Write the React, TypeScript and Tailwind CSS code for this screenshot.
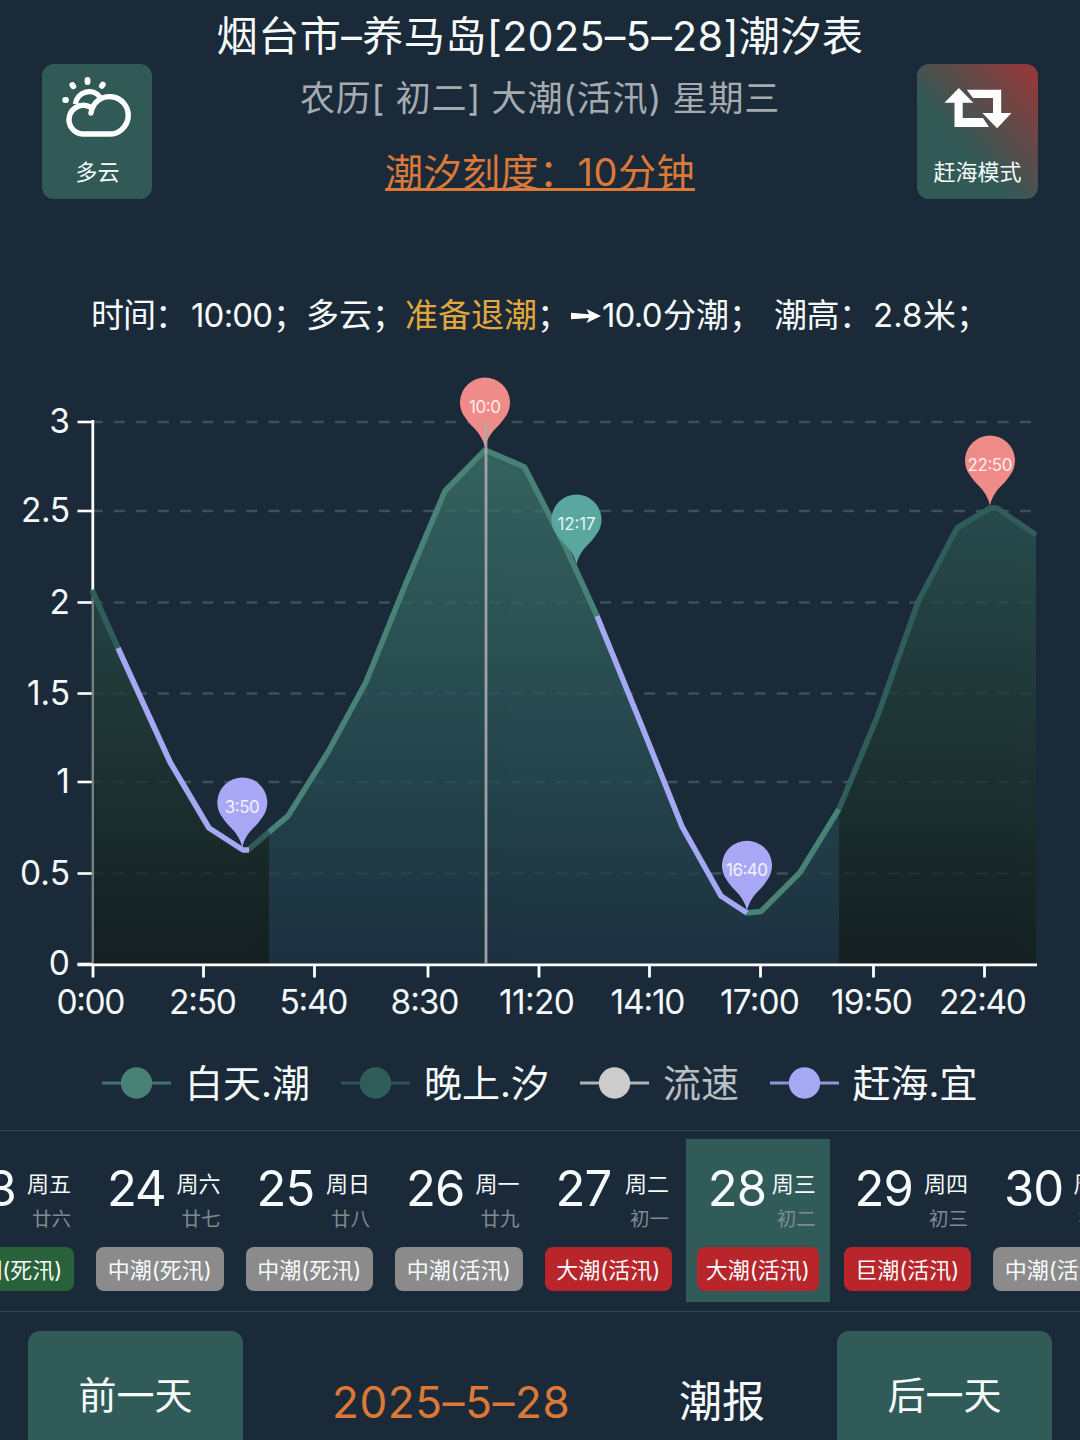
import clsx from 'clsx';

interface TideDay {
  day: string;
  week: string;
  lunar: string;
  tide: string;
  level: 'low' | 'mid' | 'high';
}

const days: TideDay[] = [
  { day: '23', week: '周五', lunar: '廿六', tide: '小潮(死汛)', level: 'low' },
  { day: '24', week: '周六', lunar: '廿七', tide: '中潮(死汛)', level: 'mid' },
  { day: '25', week: '周日', lunar: '廿八', tide: '中潮(死汛)', level: 'mid' },
  { day: '26', week: '周一', lunar: '廿九', tide: '中潮(活汛)', level: 'mid' },
  { day: '27', week: '周二', lunar: '初一', tide: '大潮(活汛)', level: 'high' },
  { day: '28', week: '周三', lunar: '初二', tide: '大潮(活汛)', level: 'high' },
  { day: '29', week: '周四', lunar: '初三', tide: '巨潮(活汛)', level: 'high' },
  { day: '30', week: '周五', lunar: '初四', tide: '中潮(活汛)', level: 'mid' },
];

const levelClass = {
  low: 'bg-[#29613a]',
  mid: 'bg-[#8b8b8b]',
  high: 'bg-[#b8262b]',
};

const yTicks = [
  { label: '3', y: 422, w: 19 },
  { label: '2.5', y: 511, w: 49 },
  { label: '2', y: 602.5, w: 19 },
  { label: '1.5', y: 693.5, w: 43 },
  { label: '1', y: 782, w: 0 },
  { label: '0.5', y: 873.5, w: 50 },
  { label: '0', y: 964, w: 20 },
];

const xTicks = [
  { label: '0:00', x: 93, tx: 91, w: 69 },
  { label: '2:50', x: 203.5, tx: 203, w: 68 },
  { label: '5:40', x: 314.5, tx: 314, w: 69 },
  { label: '8:30', x: 428, tx: 425, w: 69 },
  { label: '11:20', x: 539, tx: 537, w: 76 },
  { label: '14:10', x: 649.5, tx: 648, w: 75 },
  { label: '17:00', x: 760.5, tx: 760, w: 80 },
  { label: '19:50', x: 873.5, tx: 872, w: 82 },
  { label: '22:40', x: 984.5, tx: 983, w: 88 },
];

const pins = [
  { label: '3:50', x: 242.3, y: 802.5, w: 35, color: '#a9a8f6' },
  { label: '10:0', x: 485, y: 402.5, w: 32, color: '#ef8b88' },
  { label: '12:17', x: 576.5, y: 519.5, w: 38, color: '#5aa7a0' },
  { label: '16:40', x: 747, y: 865.7, w: 42, color: '#a9a8f6' },
  { label: '22:50', x: 990, y: 460.5, w: 45, color: '#ef8b88' },
];

const DAY = '#488277';
const NIGHT = '#305c59';
const SEA = '#a5a8f3';

const segments = [
  { color: NIGHT, points: '92,590 118,648' },
  { color: NIGHT, points: '248,850 269,832' },
  { color: DAY, points: '269,832 288,816 328,752 366,682 406,583 445,491 485,450 524.5,467 566,548 597,616' },
  { color: DAY, points: '746,913 761,911.5 800,872.5 839,809' },
  { color: NIGHT, points: '839,809 878,715 918,602 957,528 990,508 997,508 1036,535' },
  { color: SEA, points: '118,648 170,762 209,828 243,850 249,850' },
  { color: SEA, points: '597,616 643,729 682,826.5 721,896 747,913' },
];

const legend = [
  { label: '白天.潮', color: DAY },
  { label: '晚上.汐', color: NIGHT },
  { label: '流速', color: '#cccccc' },
  { label: '赶海.宜', color: SEA },
];

function CloudIcon() {
  return (
    <svg width="70" height="62" viewBox="63 76 70 62" fill="none" stroke="#fff" strokeWidth="5.4" strokeLinecap="round">
      <path d="M92 113 A18.7 18.7 0 1 1 109.5 134 H84 A14.3 14.3 0 1 1 90.5 106.8" />
      <path d="M76.5 104 A13.8 13.8 0 0 1 101.5 97.5" strokeLinecap="butt" />
      <path d="M88.5 79.8v2.2 M73.4 85l.9 1.3 M103.8 84.6l-.9 1.3 M66.2 100h.8" strokeWidth="5.8" />
    </svg>
  );
}

function SwitchIcon() {
  return (
    <svg width="68" height="42" viewBox="943.5 87 68 42" fill="#fff">
      <path d="M958.4 88 972.8 102.7H962.2V118H982.5L988.5 127H954V102.7H943.9Z" />
      <path d="M966.3 89.7H1000.7V113H1011L996.6 128.2 981.8 113H992.5V98H972.5Z" />
    </svg>
  );
}

function TideChart() {
  return (
    <svg className="block shrink-0" width="1080" height="680" viewBox="0 360 1080 680" fontFamily="Inter, sans-serif">
      <defs>
        <linearGradient id="dayFill" gradientUnits="userSpaceOnUse" x1="0" y1="450" x2="0" y2="964">
          <stop offset="0" stopColor="#3d736a" />
          <stop offset=".5" stopColor="#2b5557" />
          <stop offset="1" stopColor="#1d3241" />
        </linearGradient>
        <linearGradient id="nightFill" gradientUnits="userSpaceOnUse" x1="0" y1="507" x2="0" y2="964">
          <stop offset="0" stopColor="#2b5553" />
          <stop offset=".53" stopColor="#1f3531" />
          <stop offset="1" stopColor="#121c19" />
        </linearGradient>
      </defs>

      {/* Achsen und Raster */}
      {yTicks.slice(0, 6).map(t => (
        <path key={t.label} d={`M91.7 ${t.y}H1034`} stroke="#3d4f5a" strokeWidth="2.4" strokeDasharray="11 11.1" />
      ))}
      <path d="M92.8 420V592" stroke="#fff" strokeWidth="2.8" />
      {yTicks.map(t => (
        <path key={t.label} d={`M77.5 ${t.y}H92`} stroke="#fff" strokeWidth="2.6" />
      ))}

      <g opacity=".76">
        <path d="M92 592 118 648 170 762 209 828 243 850 249 850 269 832V964H92Z" fill="url(#nightFill)" />
        <path d="M269 832 288 816 328 752 366 682 406 583 445 491 485 450 524.5 467 566 548 597 616 643 729 682 826.5 721 896 747 913 761 911.5 800 872.5 839 809V964H269Z" fill="url(#dayFill)" />
        <path d="M839 809 878 715 918 602 957 528 990 508 997 508 1036 535V964H839Z" fill="url(#nightFill)" />
      </g>
      <path d="M92.8 596V964" stroke="#73827f" strokeWidth="2.4" />

      {segments.map(s => (
        <polyline key={s.points} points={s.points} fill="none" stroke={s.color} strokeWidth="5.6" strokeLinejoin="round" />
      ))}

      <path d="M77.5 964.8H1037" stroke="#fff" strokeWidth="2.8" />
      {xTicks.map(t => (
        <path key={t.label} d={`M${t.x} 964V977.5`} stroke="#fff" strokeWidth="2.8" />
      ))}

      {pins.map(p => (
        <path
          key={p.label}
          transform={`translate(${p.x} ${p.y})`}
          d="M0 45C-2.5 34-8 28.5-14 22.5-17 19.5-18.5 17-19.5 15.6A25 25 0 1 1 19.5 15.6C18.5 17 17 19.5 14 22.5 8 28.5 2.5 34 0 45Z"
          fill={p.color}
        />
      ))}
      <path d="M486 422V964" stroke="#a9adac" strokeWidth="2.8" opacity=".9" />
      {pins.map(p => (
        <text key={p.label} x={p.x} y={p.y + 10.3} fill="#fff" fillOpacity=".88" fontSize="17" fontWeight="380" textAnchor="middle" textLength={p.w}>
          {p.label}
        </text>
      ))}

      {yTicks.map(t => (
        <text key={t.label} x="70" y={t.y + 11.3} fill="#f4f8fa" fontSize="33.5" fontWeight="385" textAnchor="end" textLength={t.w || undefined}>
          {t.label}
        </text>
      ))}
      {xTicks.map(t => (
        <text key={t.label} x={t.tx} y="1013.7" fill="#f4f8fa" fontSize="33.5" fontWeight="385" textAnchor="middle" textLength={t.w}>
          {t.label}
        </text>
      ))}
    </svg>
  );
}

function DayCell({ item, active }: { item: TideDay; active: boolean }) {
  return (
    <div className="flex w-[149.5px] shrink-0 justify-center">
      <div className={clsx('flex h-[163px] flex-col items-center', active ? 'w-[144px] bg-[#305b58]' : 'w-[127.5px]')}>
        <div className={clsx('flex h-[108px] justify-between pt-[20px] pr-[3px] pl-[11px]', active ? 'w-[122px]' : 'w-[127.5px]')}>
          <span className="text-[49px] leading-[59px] tracking-[-1px]">{item.day}</span>
          <div className="flex flex-col items-end pt-[10px] whitespace-nowrap">
            <span className="text-[22px] leading-[30px]">{item.week}</span>
            <span className="mt-[5px] text-[19.5px] leading-[30px] text-[#7f8b90]">{item.lunar}</span>
          </div>
        </div>
        <div
          className={clsx(
            'flex h-[44px] items-center justify-center rounded-lg pt-[2px] text-[22px] whitespace-nowrap',
            active ? 'w-[122px]' : 'w-[127.5px]',
            levelClass[item.level]
          )}
        >
          {item.tide}
        </div>
      </div>
    </div>
  );
}

export default function App() {
  return (
    <div className="flex h-[1440px] w-[1080px] flex-col overflow-hidden bg-[#1a2a38] font-[Inter,'Noto_Sans_CJK_SC',sans-serif] [font-weight:385] text-[#f6fafb]">
      <header className="grid h-[280px] shrink-0 grid-cols-[163px_1fr_163px]">
        <div className="pt-[64px] pl-[42px]">
          <div className="flex h-[135px] w-[110px] flex-col items-center rounded-xl bg-[#315a57] pt-[12px]">
            <CloudIcon />
            <span className="mt-[18px] ml-px text-[22px] leading-[32px]">多云</span>
          </div>
        </div>
        <div className="flex flex-col items-center whitespace-nowrap">
          <h1 className="mt-[5px] text-[41.2px] leading-[62px] tracking-[0.35px]">烟台市–养马岛[2025–5–28]潮汐表</h1>
          <p className="mt-[6px] text-[35px] leading-[50px] tracking-[0.8px] text-[#a5acb1]">农历[ 初二] 大潮(活汛) 星期三</p>
          <p className="mt-[22px] text-[38px] leading-[54px] tracking-[0.5px] text-[#dd7938] underline decoration-[3px] underline-offset-[2px] [text-decoration-skip-ink:none]">
            潮汐刻度：10分钟
          </p>
        </div>
        <div className="pt-[64px]">
          <div className="flex h-[135px] w-[121px] flex-col items-center rounded-xl bg-[linear-gradient(to_bottom_left,#8e3b3a_8%,#315a57_62%)] pt-[23px]">
            <SwitchIcon />
            <span className="mt-[27px] text-[22px] leading-[32px]">赶海模式</span>
          </div>
        </div>
      </header>

      <div className="flex h-[80px] shrink-0 pt-[10px] pl-[91px] text-[33px] leading-[50px] whitespace-nowrap">
        <span className="w-[100px] tracking-[-1px]">时间：</span>
        <span className="w-[82px] tracking-[-0.8px]">10:00</span>
        <span className="w-[33px]">；</span>
        <span className="w-[99px]">多云；</span>
        <span className="w-[132px] text-[#e3a83c]">准备退潮</span>
        <span className="w-[33px]">；</span>
        <svg className="mt-[17px] w-[32px]" height="18" viewBox="0 0 32 18" fill="#fff">
          <path d="M1 5.8 19 7.2 16.5 2 31 9 16.5 16 19 10.9 1 12.2Z" />
        </svg>
        <span className="w-[61px] tracking-[-0.8px]">10.0</span>
        <span className="w-[111px]">分潮；</span>
        <span className="w-[99px] tracking-[-0.5px]">潮高：</span>
        <span className="w-[50px]">2.8</span>
        <span>米；</span>
      </div>

      <TideChart />

      <div className="flex h-[90px] shrink-0 pl-[102px]">
        {legend.map(l => (
          <div key={l.label} className={clsx('flex h-[86px] shrink-0 items-center', l.label === '流速' ? 'w-[189.5px]' : 'w-[239px]')}>
            <svg width="69" height="32" viewBox="0 0 69 32">
              <path d="M0 16H69" stroke={l.color} strokeWidth="3" opacity=".85" />
              <circle cx="34.5" cy="16" r="15.7" fill={l.color} />
            </svg>
            <span className={clsx('ml-[14px] text-[38px] leading-[54px] whitespace-nowrap', l.label === '流速' && 'text-[#b9bfc3]')}>
              {l.label}
            </span>
          </div>
        ))}
      </div>

      <div className="flex h-[182px] shrink-0 border-y border-[#2f4850] pt-[8px]">
        <div className="-ml-[64.5px] flex">
          {days.map(d => (
            <DayCell key={d.day} item={d} active={d.day === '28'} />
          ))}
        </div>
      </div>

      <footer className="flex shrink-0 justify-between px-[28px] pt-[19px]">
        <button className="h-[128px] w-[215px] rounded-xl bg-[#305b58] text-[38px]">前一天</button>
        <div className="flex h-[141px] flex-1 items-center whitespace-nowrap">
          <span className="ml-[89px] w-[347px] text-[44px] tracking-[0.6px] text-[#dd7938]">2025–5–28</span>
          <span className="text-[43px]">潮报</span>
        </div>
        <button className="h-[128px] w-[215px] rounded-xl bg-[#305b58] text-[38px]">后一天</button>
      </footer>
    </div>
  );
}
